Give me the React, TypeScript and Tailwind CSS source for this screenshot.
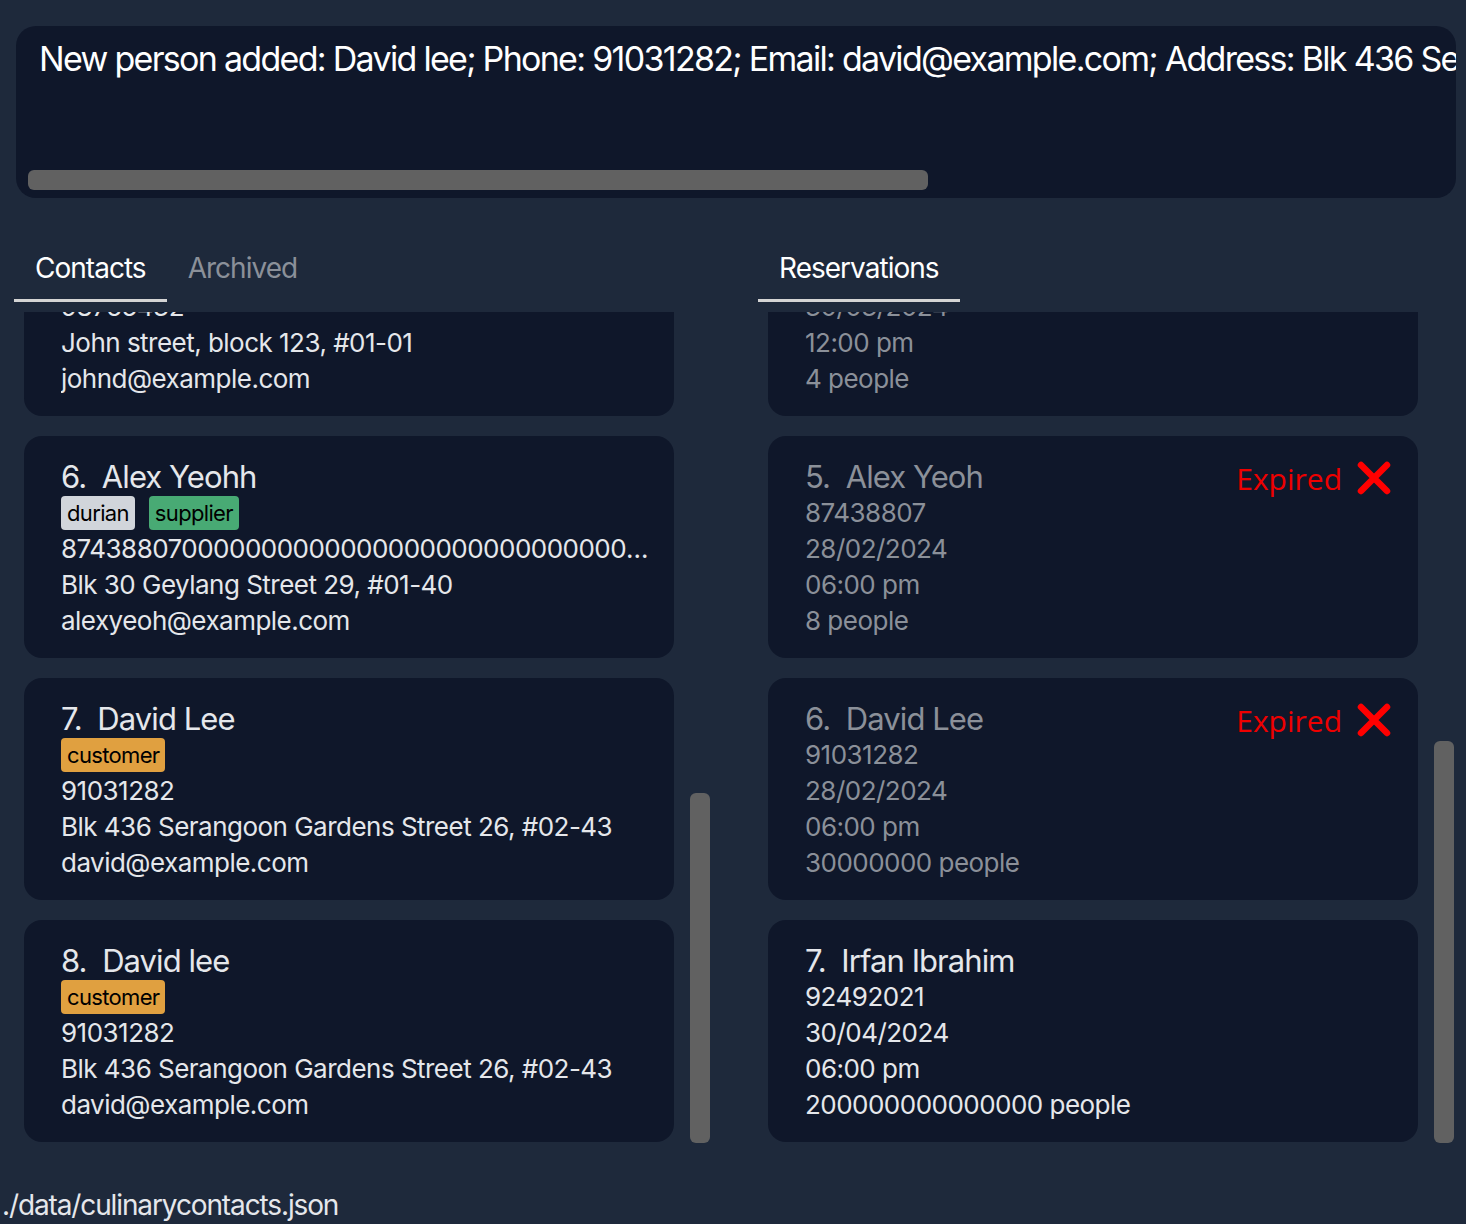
import React from 'react'

type Tag = { label: string; color: string }

type Contact = {
  index: number
  name: string
  tags: Tag[]
  phone: string
  address: string
  email: string
}

type Reservation = {
  index: number
  name: string
  phone: string
  date: string
  time: string
  pax: string
  expired: boolean
}

const tagStyles: Record<string, string> = {
  gray: 'bg-[#d1d5db]',
  green: 'bg-[#48aa74]',
  orange: 'bg-[#e0a040]',
}

const contacts: Contact[] = [
  {
    index: 5,
    name: 'John Doe',
    tags: [{ label: 'friends', color: 'gray' }],
    phone: '98765432',
    address: 'John street, block 123, #01-01',
    email: 'johnd@example.com',
  },
  {
    index: 6,
    name: 'Alex Yeohh',
    tags: [
      { label: 'durian', color: 'gray' },
      { label: 'supplier', color: 'green' },
    ],
    phone: '874388070000000000000000000000000000000',
    address: 'Blk 30 Geylang Street 29, #01-40',
    email: 'alexyeoh@example.com',
  },
  {
    index: 7,
    name: 'David Lee',
    tags: [{ label: 'customer', color: 'orange' }],
    phone: '91031282',
    address: 'Blk 436 Serangoon Gardens Street 26, #02-43',
    email: 'david@example.com',
  },
  {
    index: 8,
    name: 'David lee',
    tags: [{ label: 'customer', color: 'orange' }],
    phone: '91031282',
    address: 'Blk 436 Serangoon Gardens Street 26, #02-43',
    email: 'david@example.com',
  },
]

const reservations: Reservation[] = [
  { index: 4, name: 'John Doe', phone: '98765432', date: '30/03/2024', time: '12:00 pm', pax: '4', expired: true },
  { index: 5, name: 'Alex Yeoh', phone: '87438807', date: '28/02/2024', time: '06:00 pm', pax: '8', expired: true },
  { index: 6, name: 'David Lee', phone: '91031282', date: '28/02/2024', time: '06:00 pm', pax: '30000000', expired: true },
  { index: 7, name: 'Irfan Ibrahim', phone: '92492021', date: '30/04/2024', time: '06:00 pm', pax: '200000000000000', expired: false },
]

const line = 'text-[26px] leading-[36px] tracking-[-0.02em]'
const title = 'text-[31px] tracking-[-0.03em]'

function RedCross() {
  return (
    <svg width="36" height="36" viewBox="0 0 36 36" className="shrink-0">
      <path d="M5 5 L31 31 M31 5 L5 31" stroke="#ff0000" strokeWidth="6.5" strokeLinecap="round" />
    </svg>
  )
}

function ContactCard({ c }: { c: Contact }) {
  return (
    <div className="h-[222px] shrink-0 rounded-[18px] bg-[#0f172a] pl-[37px] pr-[20px] pt-[23px] text-[#e5e7eb]">
      <div className={`${title} leading-[36px]`}>
        {c.index}.&nbsp; {c.name}
      </div>
      <div className="flex h-[36px] items-center gap-[14px]">
        {c.tags.map((t) => (
          <span key={t.label} className={`flex h-[34px] items-center rounded-[4px] px-[6px] text-[22px] tracking-[-0.03em] text-black ${tagStyles[t.color]}`}>
            {t.label}
          </span>
        ))}
      </div>
      <div className={`truncate ${line}`}>{c.phone}</div>
      <div className={`truncate ${line}`}>{c.address}</div>
      <div className={`truncate ${line}`}>{c.email}</div>
    </div>
  )
}

function ReservationCard({ r }: { r: Reservation }) {
  const color = r.expired ? 'text-[#8b9099]' : 'text-[#e5e7eb]'
  return (
    <div className={`flex h-[222px] shrink-0 rounded-[18px] bg-[#0f172a] pl-[37px] pr-[26px] pt-[22px] ${color}`}>
      <div className="flex-1">
        <div className={`${title} leading-[37px]`}>
          {r.index}.&nbsp; {r.name}
        </div>
        <div className={line}>{r.phone}</div>
        <div className={line}>{r.date}</div>
        <div className={line}>{r.time}</div>
        <div className={line}>{r.pax} people</div>
      </div>
      {r.expired ? (
        <div className="flex h-[40px] items-center gap-[14px]">
          <span className="text-[30px] text-[#ee0000] [font-family:'Open_Sans',sans-serif]">Expired</span>
          <RedCross />
        </div>
      ) : null}
    </div>
  )
}

function Scrollbar({ top, height }: { top: string; height: string }) {
  return (
    <div className="ml-[16px] flex w-[20px] flex-col">
      <div className={`w-[20px] rounded-[6px] bg-[#616161] ${top} ${height}`} />
    </div>
  )
}

function Tab({ label, active }: { label: string; active?: boolean }) {
  return (
    <div
      className={`flex h-[66px] items-center px-[21px] text-[28px] tracking-[-0.035em] ${
        active ? 'border-b-[3px] border-[#d4d4d4] text-white' : 'border-b-[3px] border-transparent text-[#8b9099]'
      }`}
    >
      {label}
    </div>
  )
}

export default function App() {
  return (
    <div className="flex h-[1224px] w-[1466px] flex-col overflow-hidden bg-[#1e293b] [font-family:Inter,'Noto_Sans',sans-serif]">
      <div className="ml-[16px] mt-[26px] flex h-[172px] w-[1440px] flex-col overflow-hidden rounded-[20px] bg-[#0f172a]">
        <div className="whitespace-nowrap pl-[23px] pt-[13px] text-[34px] leading-[40px] tracking-[-0.05em] text-white">
          New person added: David lee; Phone: 91031282; Email: david@example.com; Address: Blk 436 Serangoon Gardens Street 26, #02-43; Tags: [customer]
        </div>
        <div className="ml-[12px] mt-auto mb-[8px] h-[20px] w-[900px] rounded-[6px] bg-[#616161]" />
      </div>

      <div className="mt-[38px] flex">
        <div className="ml-[14px] flex w-[744px] flex-col">
          <div className="flex">
            <Tab label="Contacts" active />
            <Tab label="Archived" />
          </div>
          <div className="ml-[10px] mt-[10px] flex h-[840px]">
            <div className="w-[650px] overflow-hidden">
              <div className="-mt-[118px] flex flex-col gap-[20px]">
                {contacts.map((c) => (
                  <ContactCard key={c.index} c={c} />
                ))}
              </div>
            </div>
            <Scrollbar top="mt-[481px]" height="h-[350px]" />
          </div>
        </div>

        <div className="flex w-[708px] flex-col">
          <div className="flex">
            <Tab label="Reservations" active />
          </div>
          <div className="ml-[10px] mt-[10px] flex h-[840px]">
            <div className="w-[650px] overflow-hidden">
              <div className="-mt-[118px] flex flex-col gap-[20px]">
                {reservations.map((r) => (
                  <ReservationCard key={r.index} r={r} />
                ))}
              </div>
            </div>
            <Scrollbar top="mt-[429px]" height="h-[402px]" />
          </div>
        </div>
      </div>

      <div className="pl-[2px] pt-[35px] text-[28px] leading-[36px] tracking-[-0.04em] text-[#e5e7eb]">
        ./data/culinarycontacts.json
      </div>
    </div>
  )
}
